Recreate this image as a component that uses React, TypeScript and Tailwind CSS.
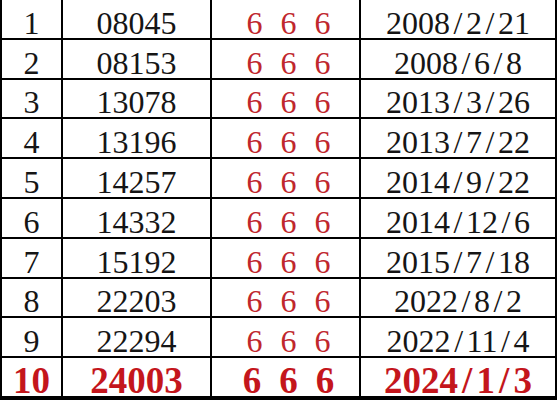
const rows = [
  { n: '1', code: '08045', date: '2008/2/21' },
  { n: '2', code: '08153', date: '2008/6/8' },
  { n: '3', code: '13078', date: '2013/3/26' },
  { n: '4', code: '13196', date: '2013/7/22' },
  { n: '5', code: '14257', date: '2014/9/22' },
  { n: '6', code: '14332', date: '2014/12/6' },
  { n: '7', code: '15192', date: '2015/7/18' },
  { n: '8', code: '22203', date: '2022/8/2' },
  { n: '9', code: '22294', date: '2022/11/4' },
  { n: '10', code: '24003', date: '2024/1/3', hot: true },
];

// slashes are as wide as the digits in the original font
function DateText({ value }: { value: string }) {
  return (
    <span>
      {value.split('').map((ch, i) =>
        ch === '/' ? (
          <span key={i} className="inline-block w-[0.5em] text-center">
            /
          </span>
        ) : (
          <span key={i}>{ch}</span>
        ),
      )}
    </span>
  );
}

function Cell({ children, hot }: { children: React.ReactNode; hot?: boolean }) {
  return (
    <div
      className={
        hot
          ? 'flex items-end justify-center bg-white pb-[3px] text-[37px] font-bold leading-[24px] text-[#c4161c]'
          : 'flex items-end justify-center bg-white pb-[3px] text-[32px] leading-[24px] text-[#151515]'
      }
    >
      {children}
    </div>
  );
}

export default function App() {
  return (
    <div
      className="grid h-[400px] w-[557px] grid-cols-[59px_147px_147px_194px] grid-rows-[repeat(10,minmax(0,1fr))] gap-[2px] bg-black px-[2px] pb-[4px]"
      style={{ fontFamily: '"Liberation Serif", "Times New Roman", serif' }}
    >
      {rows.map((r) => (
        <div key={r.n} className="contents">
          <Cell hot={r.hot}>{r.n}</Cell>
          <Cell hot={r.hot}>{r.code}</Cell>
          <div
            className={
              r.hot
                ? 'flex items-end justify-center gap-[18px] bg-white pb-[3px] pl-[6px] text-[37px] font-bold leading-[24px] text-[#c4161c]'
                : 'flex items-end justify-center gap-[18px] bg-white pb-[3px] pl-[6px] text-[32px] leading-[24px] text-[#c0272d]'
            }
          >
            <span>6</span>
            <span>6</span>
            <span>6</span>
          </div>
          <Cell hot={r.hot}>
            <DateText value={r.date} />
          </Cell>
        </div>
      ))}
    </div>
  );
}
